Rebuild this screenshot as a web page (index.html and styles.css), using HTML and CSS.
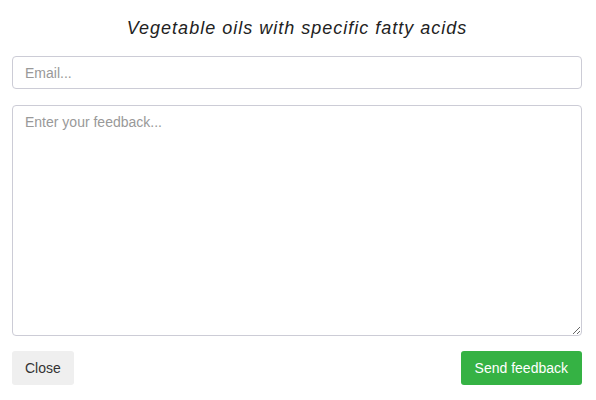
FILE: index.html
```html
<!DOCTYPE html>
<html>
<head>
<meta charset="utf-8">
<link rel="stylesheet" href="styles.css">
</head>
<body>
<div class="modal">
  <h1 class="title">Vegetable oils with specific fatty acids</h1>
  <input class="field" type="text" placeholder="Email...">
  <textarea class="field area" placeholder="Enter your feedback..."></textarea>
  <div class="actions">
    <button class="btn btn-close">Close</button>
    <button class="btn btn-send">Send feedback</button>
  </div>
</div>
</body>
</html>
```
FILE: styles.css
```css
html, body { margin: 0; padding: 0; background: #fff; }
body { font-family: "Liberation Sans", Arial, sans-serif; font-size: 14px; color: #333; }
.modal { padding: 16px 14px 0 12px; display: flex; flex-direction: column; }
.title {
  margin: 0 0 16px 0;
  font-size: 18px;
  font-style: italic;
  font-weight: normal;
  letter-spacing: 1px;
  text-align: center;
  line-height: 24px;
  color: #222;
}
.field {
  box-sizing: border-box;
  width: 100%;
  border: 1px solid #ccccd6;
  border-radius: 4px;
  padding: 8px 12px;
  font-family: inherit;
  font-size: 14px;
  color: #333;
  outline: none;
}
input.field { height: 33px; margin-bottom: 16px; }
.field::placeholder { color: #999; }
.area { height: 231px; resize: vertical; display: block; padding-top: 8px; }
.actions { display: flex; justify-content: space-between; margin-top: 15px; }
.btn {
  font-family: inherit;
  font-size: 14px;
  border: none;
  border-radius: 3px;
  height: 34px;
  padding: 0 13px;
  cursor: pointer;
}
.btn-close { background: #efefef; color: #333; }
.btn-send { background: #35b244; color: #fff; padding: 0 14px; }
```
